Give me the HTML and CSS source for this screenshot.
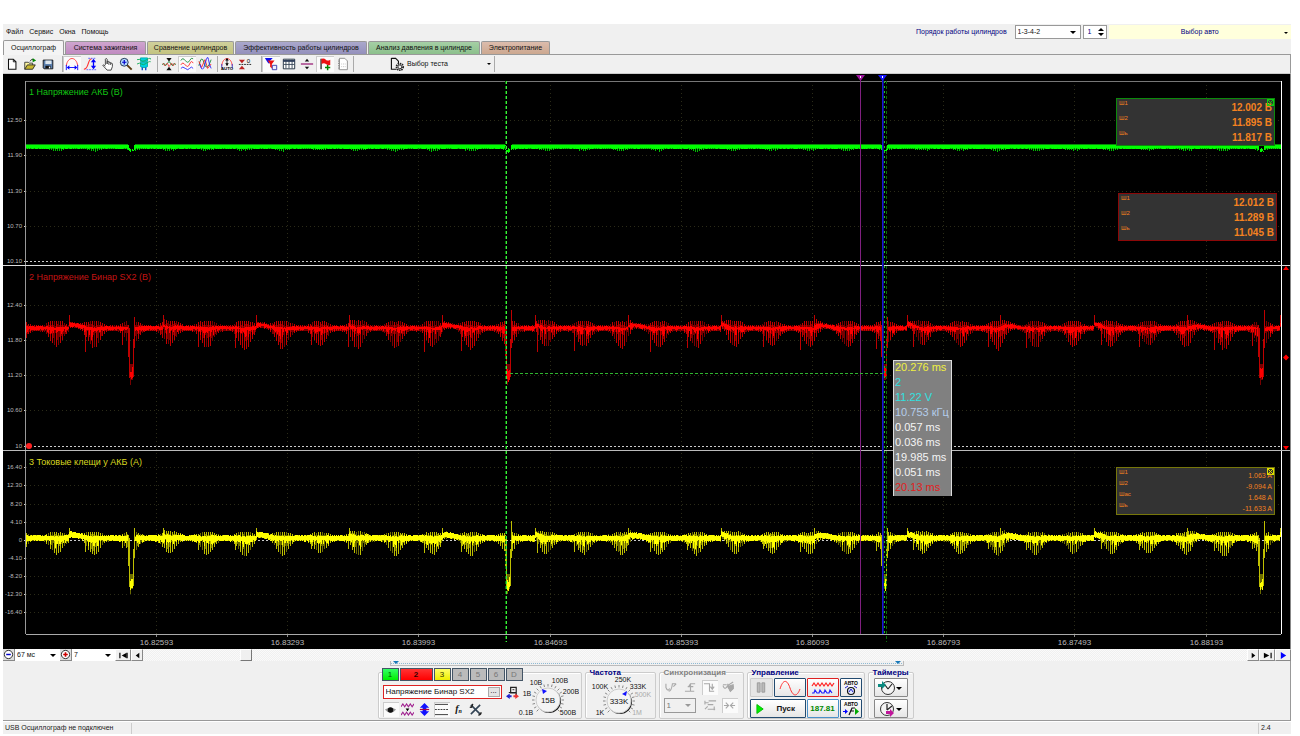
FILE: index.html
```html
<!DOCTYPE html>
<html lang="ru">
<head>
<meta charset="utf-8">
<title>USB Осциллограф</title>
<link rel="stylesheet" href="styles.css">
</head>
<body>
<div class="app">
  <header class="menubar">
    <nav class="menu">
      <button>Файл</button><button>Сервис</button><button>Окна</button><button>Помощь</button>
    </nav>
    <div class="setup">
      <label for="order">Порядок работы цилиндров</label>
      <span class="combo combo-order"><select id="order"><option>1-3-4-2</option></select></span>
      <span class="spin"><input id="cyl" value="1" aria-label="Цилиндр"><span class="spin-arrows"><button class="up" aria-label="Больше"></button><button class="down" aria-label="Меньше"></button></span></span>
      <button class="car">Выбор авто</button>
    </div>
  </header>

  <nav class="tabs">
    <button class="tab tab-active">Осциллограф</button>
    <button class="tab tab-ignition">Система зажигания</button>
    <button class="tab tab-compare">Сравнение цилиндров</button>
    <button class="tab tab-efficiency">Эффективность работы цилиндров</button>
    <button class="tab tab-pressure">Анализ давления в цилиндре</button>
    <button class="tab tab-power">Электропитание</button>
  </nav>

  <div class="toolbar">
    <div class="tools tools-file">
      <button class="tool" aria-label="Новый"><svg viewBox="0 0 16 16"><path d="M4 2.500h5.500l3 3v8.500H4z" fill="#fff" stroke="#111" stroke-width="1.200"/><path d="M9.500 2.500v3h3" fill="none" stroke="#111"/></svg></button>
      <button class="tool" aria-label="Открыть"><svg viewBox="0 0 16 16"><path d="M2 14V6h4l1 1h4v2" fill="#fff7a0" stroke="#333"/><path d="M2 14l3-5h9l-3 5z" fill="#c8b830" stroke="#222"/><path d="M8 5q1-3 4-2" fill="none" stroke="#222"/><path d="M11 1l4 3-4 2z" fill="#080"/></svg></button>
      <button class="tool" aria-label="Сохранить"><svg viewBox="0 0 16 16"><path d="M2.500 3.500h11v10h-10l-1-1z" fill="#5a80b0" stroke="#111"/><path d="M5 4h7v4H5z" fill="#dde6ee"/><path d="M5 10h6v3H5z" fill="#111"/><path d="M9 11h1.500v2H9z" fill="#fff"/></svg></button>
    </div>
    <div class="tools tools-view">
      <button class="tool pressed" aria-label="Период"><svg viewBox="0 0 16 16"><path d="M1.500 10C3-1 13-1 14.500 10" fill="none" stroke="#f33"/><path d="M1.500 9v6M14.500 9v6M4 12h8" stroke="#00f" fill="none"/><path d="M2 12l3-2.500v5zM14 12l-3-2.500v5z" fill="#00f"/></svg></button>
      <button class="tool" aria-label="Амплитуда"><svg viewBox="0 0 16 16"><path d="M1 14c6 0 4-12 9-12" fill="none" stroke="#f33" stroke-width="1.300"/><path d="M6 1.500h9M4 14.500h11" stroke="#55f" stroke-dasharray="2 1"/><path d="M12 4v8" stroke="#00f" stroke-width="1.500"/><path d="M12 2l3 4H9zM12 14l3-4H9z" fill="#00f"/></svg></button>
      <button class="tool" aria-label="Рука"><svg viewBox="0 0 16 16"><path d="M5 9V2.500q1-2 2 0V8V5q1.500-1 2 1q1.500-1 2 1q2-.5 2 1v3l-1.500 4H7L2 9.500q1-1.500 3 1" fill="#fff" stroke="#333"/><path d="M9 6v3M11 7v2" stroke="#333"/></svg></button>
      <button class="tool" aria-label="Масштаб"><svg viewBox="0 0 16 16"><path d="M9 9l5.500 5.500" stroke="#5a3a10" stroke-width="2.200"/><circle cx="6" cy="6" r="4.500" fill="#b8dcff" stroke="#124"/><path d="M3.500 6h5M6 3.500v5" stroke="#00c" stroke-width="1.400"/></svg></button>
      <button class="tool" aria-label="Печать"><svg viewBox="0 0 16 16"><path d="M4 1h8v4H4zM4 6h8v5l-2 1H6l-2-1z" fill="#00d0e0" stroke="#0aa"/><path d="M0 3q4-1 5 1t6-1 5 0M0 8q3-2 5 0t6-1 5-1" fill="none" stroke="#1a5"/><path d="M6 12v3M10 12v3" stroke="#04c" stroke-width="1.500"/></svg></button>
    </div>
    <div class="tools tools-wave">
      <button class="tool" aria-label="Центр"><svg viewBox="0 0 16 16"><path d="M0 9l2-2 2 3 4-5 4 5 2-3 2 2" fill="none" stroke="#183"/><path d="M1 7l2 3 3-3 2 4 3-4 2 3 2-3" fill="none" stroke="#e44"/><path d="M8 5L5 1h6zM8 11l-3 4h6z" fill="#111"/></svg></button>
      <button class="tool pressed" aria-label="Раздельно"><svg viewBox="0 0 16 16"><path d="M1 4q2-4 5 0t5 0 4-2" fill="none" stroke="#183"/><path d="M1 9q2-4 5 0t5-1 4-1" fill="none" stroke="#f22"/><path d="M1 13q2-3 5 0t5 0 4 0" fill="none" stroke="#22f"/></svg></button>
      <button class="tool" aria-label="Совместно"><svg viewBox="0 0 16 16"><path d="M1 10q3-14 6-3t8-4" fill="none" stroke="#183"/><path d="M1 5l3 7 4-9 3 10 4-5" fill="none" stroke="#f22"/><path d="M2 8q3 12 6 0t4-5 3 10" fill="none" stroke="#22f"/></svg></button>
    </div>
    <div class="tools tools-auto">
      <button class="tool" aria-label="Авто"><svg viewBox="0 0 16 16"><path d="M2 10C3-1 13-1 14 10" fill="none" stroke="#f33"/><path d="M2 8v5M14 8v5" stroke="#33c"/><path d="M8 2v8" stroke="#111"/><path d="M8 1l2 3H6zM8 10l2-3H6z"/><text x="1" y="15" font-size="5" font-weight="bold">AUTO</text></svg></button>
      <button class="tool" aria-label="Ноль"><svg viewBox="0 0 16 16"><path d="M1 3h7L4.500 7zM1 14h7L4.500 10z" fill="#b22"/><path d="M1 8.500h14" stroke="#111" stroke-dasharray="2 1"/><text x="10" y="7" font-size="7">0</text></svg></button>
    </div>
    <div class="tools tools-marks">
      <button class="tool pressed" aria-label="Фильтр"><svg viewBox="0 0 16 16"><path d="M1 1h9L6 5v3L4 6z" fill="#11e"/><path d="M4 4h8L9 8v5l-2-2V8z" fill="#e11"/><path d="M9.500 9.500h5v5h-5z" fill="#eef" stroke="#33a"/></svg></button>
      <button class="tool" aria-label="Таблица"><svg viewBox="0 0 16 16"><path d="M1.500 2.500h13v11h-13z" fill="#fff" stroke="#123"/><path d="M1.500 4.500h13" stroke="#235" stroke-width="2"/><path d="M4.500 3v10M8 3v10M11.500 3v10M2 8.500h12" stroke="#345"/></svg></button>
      <button class="tool" aria-label="Разделить"><svg viewBox="0 0 16 16"><path d="M1 8h14" stroke="#a03080" stroke-width="1.600"/><path d="M8 2l2.500 3h-5zM8 14l2.500-3h-5z" fill="#111"/></svg></button>
      <button class="tool pressed" aria-label="Метка"><svg viewBox="0 0 16 16"><path d="M3.500 2v12" stroke="#111" stroke-width="1.400"/><path d="M4 2q3-1 5 1t5 0v6q-3 1-5-1t-5 0z" fill="#e11"/><path d="M8 12h6M11 9v6" stroke="#080" stroke-width="1.700"/></svg></button>
      <button class="tool" aria-label="Отчет"><svg viewBox="0 0 16 16"><path d="M4 1.500h6l3 3v10H4z" fill="#fff" stroke="#888"/><path d="M3 3v11" stroke="#666" stroke-dasharray="1 1"/><path d="M6 8h5M6 11h5" stroke="#bbb" stroke-dasharray="1 1"/></svg></button>
    </div>
    <button class="test">
      <svg viewBox="0 0 16 16"><path d="M1.500 1v12H7M1.500 1.500H6l3 3V7" fill="none" stroke="#111" stroke-width="1.200"/><circle cx="10.500" cy="10.500" r="3.500" fill="none" stroke="#222" stroke-width="2" stroke-dasharray="1.500 .8"/><circle cx="10.500" cy="10.500" r="2" fill="none" stroke="#333"/></svg>
      <span>Выбор теста</span>
    </button>
  </div>

  <main class="scope">
    <svg class="plot" id="plot" role="img" aria-label="Осциллограммы трёх каналов"></svg>
    <section class="measure measure-one"><i class="close"></i>
      <dl><div><dt>Ш1</dt><dd>12.002 В</dd></div><div><dt>Ш2</dt><dd>11.895 В</dd></div><div><dt>Шь</dt><dd>11.817 В</dd></div></dl>
    </section>
    <section class="measure measure-two">
      <dl><div><dt>Ш1</dt><dd>12.012 В</dd></div><div><dt>Ш2</dt><dd>11.289 В</dd></div><div><dt>Шь</dt><dd>11.045 В</dd></div></dl>
    </section>
    <section class="measure measure-three"><i class="close"></i>
      <dl><div><dt>Ш1</dt><dd>1.063 A</dd></div><div><dt>Ш2</dt><dd>-9.094 A</dd></div><div><dt>Шас</dt><dd>1.648 A</dd></div><div><dt>Шь</dt><dd>-11.633 A</dd></div></dl>
    </section>
    <ul class="readout" id="readout">
      <li class="yellow">20.276 ms</li><li class="cyan">2</li><li class="cyan">11.22 V</li><li class="pale">10.753 кГц</li><li>0.057 ms</li><li>0.036 ms</li><li>19.985 ms</li><li>0.051 ms</li><li class="red">20.13 ms</li>
    </ul>
  </main>

  <div class="timeline">
    <button class="step" aria-label="Сжать"><svg viewBox="0 0 12 12"><circle cx="6" cy="6" r="4.500" fill="#fff" stroke="#222"/><path d="M3.500 6h5" stroke="#00c" stroke-width="1.600"/></svg></button>
    <span class="combo combo-time"><select aria-label="Развёртка"><option>67 мс</option></select></span>
    <button class="step" aria-label="Растянуть"><svg viewBox="0 0 12 12"><circle cx="6" cy="6" r="4.500" fill="#fff" stroke="#222"/><path d="M3.500 6h5M6 3.500v5" stroke="#c00" stroke-width="1.800"/></svg></button>
    <span class="combo combo-zoom"><select aria-label="Масштаб"><option>7</option></select></span>
    <button class="nav nav-wide" aria-label="В начало"><svg viewBox="0 0 12 10"><path d="M2 2v6M10 2v6" stroke="#000" stroke-width="1.300"/><path d="M9.500 2v6L4 5z"/></svg></button>
    <button class="nav" aria-label="Назад"><svg viewBox="0 0 12 10"><path d="M8 2v6L4 5z"/></svg></button>
    <div class="track"><button class="thumb" aria-label="Прокрутка"></button></div>
    <button class="nav" aria-label="Вперёд"><svg viewBox="0 0 12 10"><path d="M4 2v6l4-3z"/></svg></button>
    <button class="nav nav-wide" aria-label="В конец"><svg viewBox="0 0 12 10"><path d="M10 2v6" stroke="#000" stroke-width="1.300"/><path d="M2 2v6l6-3z"/></svg></button>
    <button class="nav nav-wide" aria-label="Воспроизвести"><svg viewBox="0 0 12 10"><path d="M3 1v8l6-4z" fill="#00f"/></svg></button>
  </div>

  <div class="panel">
    <div class="splitter"><i></i><i></i></div>
    <div class="groups">
      <section class="group channels">
        <div class="chan-col">
          <div class="chan-row">
            <button class="chan chan-1">1</button><button class="chan chan-2">2</button><button class="chan chan-3">3</button><button class="chan">4</button><button class="chan">5</button><button class="chan">6</button><button class="chan">D</button>
          </div>
          <div class="name-row">
            <span class="name-box"><input aria-label="Имя канала" value="Напряжение Бинар SX2"><button>...</button></span>
            <button class="mini" aria-label="Вход"><svg viewBox="0 0 14 14"><path d="M5 1.500h6v6H5zM3 7h8v3" fill="none" stroke="#222" stroke-width="1.300"/><path d="M7 4h2" stroke="#222"/><path d="M0 11l4-3v2h2v2H4v2z" fill="#22c"/><path d="M14 11l-4-3v2H8v2h2v2z" fill="#e33"/></svg></button>
          </div>
          <div class="icon-row">
            <button class="mini pressed" aria-label="Показать"><svg viewBox="0 0 14 14"><path d="M1 7q6-4 12 0-2 3-6 3.500Q3 10 1 7z" fill="#999"/><circle cx="7" cy="7.500" r="3" fill="#111"/></svg></button>
            <button class="mini" aria-label="Инверсия"><svg viewBox="0 0 14 14"><path d="M0 4l2-3 2 3 2-3 2 3 2-3 2 3 2-3M0 13l2-3 2 3 2-3 2 3 2-3 2 3 2-3" fill="none" stroke="#a02090" stroke-width="1.200"/><path d="M5 6h4L7 9z"/></svg></button>
            <button class="mini" aria-label="Сдвиг"><svg viewBox="0 0 14 14"><path d="M7 0l5 5H9v4h3l-5 5-5-5h3V5H2z" fill="#11f"/><path d="M2 7h10" stroke="#a04" stroke-width="1.300"/></svg></button>
            <button class="mini pressed" aria-label="Сетка"><svg viewBox="0 0 14 14"><path d="M0 1.500h14M0 12.500h14" stroke="#333"/><path d="M0 7h14" stroke="#333" stroke-dasharray="2 1"/></svg></button>
            <button class="mini func" aria-label="Функция">f<sub>n</sub></button>
            <button class="mini" aria-label="Настройка"><svg viewBox="0 0 14 14"><path d="M2 2l10 10M12 2L2 12" stroke="#345" stroke-width="1.700"/><path d="M1 4q2 2 3-3M10 13q3 0 3-3" stroke="#222" fill="none" stroke-width="1.500"/></svg></button>
          </div>
        </div>
        <svg class="knob" viewBox="0 0 62 46">
          <g id="ticksOne"></g>
          <circle cx="32" cy="29" r="12" class="knob-shade"/><circle cx="31" cy="28" r="12" class="knob-face"/>
          <path d="M25 17l5 2-4 3z" class="pointer"/>
          <g class="knob-text"><text x="31" y="31" class="knob-value">15В</text><text x="19" y="13">10В</text><text x="43" y="11">100В</text><text x="54" y="22">200В</text><text x="51" y="43">500В</text><text x="9" y="43">0.1В</text><text x="10" y="24">1В</text></g>
        </svg>
      </section>
      <section class="group freq">
        <h2>Частота</h2>
        <svg class="knob" viewBox="0 0 66 46">
          <g id="ticksTwo"></g>
          <circle cx="34" cy="29" r="12" class="knob-shade"/><circle cx="33" cy="28" r="12" class="knob-face"/>
          <path d="M41 18l-1 5-4-2z" class="pointer"/>
          <g class="knob-text"><text x="33" y="31" class="knob-value">333K</text><text x="14" y="16">100K</text><text x="37" y="9">250K</text><text x="52" y="16">333K</text><text x="57" y="24" class="off">500K</text><text x="51" y="42" class="off">1M</text><text x="14" y="42">1K</text></g>
        </svg>
      </section>
      <section class="group sync">
        <h2>Синхронизация</h2>
        <div class="sync-row">
          <button class="mini" disabled aria-label="Уровень"><svg viewBox="0 0 14 14"><path d="M1 3v4q2 5 4 1M4 11q3 0 4-8h4M9 6l3-3" /></svg></button>
          <button class="mini" disabled aria-label="Фронт"><svg viewBox="0 0 14 14"><path d="M1 11h6V3h5M7 11h4M4 6h6M7 3L5 6"/></svg></button>
          <button class="mini lit" disabled aria-label="Спад"><svg viewBox="0 0 14 14"><path d="M1 3h6v8h5M10 3v5M8 6l2 3 2-3"/></svg></button>
          <button class="mini" disabled aria-label="Ручной"><svg viewBox="0 0 14 14"><path d="M1 5q2 6 5 0l6-4M1 4h4M6 3l3 8 3-3V5"/><path class="filled" d="M6 6l6-2v4l-3 3z"/></svg></button>
        </div>
        <div class="sync-row">
          <span class="combo combo-sync"><select disabled aria-label="Канал синхронизации"><option>1</option></select></span>
          <button class="mini" disabled aria-label="Диапазон"><svg viewBox="0 0 14 14"><path d="M1 4h4M1 2v4M5 2h8M4 6h6M4 11h8M4 8l-3 3M11 8v4"/></svg></button>
          <button class="mini lit" disabled aria-label="Центровать"><svg viewBox="0 0 14 14"><path d="M1 7h5M3 4l3 3-3 3M13 7H8M11 4L8 7l3 3"/></svg></button>
        </div>
      </section>
      <section class="group control">
        <h2>Управление</h2>
        <div class="control-grid">
          <div class="pair"><button class="push pause" aria-label="Пауза"><svg viewBox="0 0 12 14"><path d="M2 2h3v10H2zM7 2h3v10H7z" fill="#bbb" stroke="#999"/></svg></button><button class="push sine" aria-label="Синус"><svg viewBox="0 0 26 16"><path d="M3 9C6-1 10-1 13 8s7 9 10 1" fill="none" stroke="#f33"/></svg></button></div>
          <button class="push push-red" aria-label="Сравнить"><svg viewBox="0 0 26 16"><path d="M2 6l2-3 2 3 2-3 2 3 2-3 2 3 2-3 2 3 2-3 2 3 2-3" fill="none" stroke="#f22" stroke-width="1.200"/><path d="M2 13h2l1-3 2 3h2l1-3 2 3h2l1-3 2 3h2l1-3 2 3" fill="none" stroke="#22f" stroke-width="1.200"/></svg></button>
          <button class="push" aria-label="Авто поиск"><svg viewBox="0 0 18 16"><text x="9" y="5" text-anchor="middle" class="auto">АВТО</text><circle cx="9" cy="11" r="3.500" fill="#dfe9ff" stroke="#111" stroke-width="1.200"/><path d="M3 8l3-2M15 8l-3-2M7 12l2-3 2 3" stroke="#22c" fill="none"/></svg></button>
          <button class="push start"><svg viewBox="0 0 10 12"><path d="M1 1l7 5-7 5z" fill="#0e0" stroke="#0b0"/></svg><span>Пуск</span></button>
          <button class="push rate">187.81</button>
          <button class="push" aria-label="Авто пуск"><svg viewBox="0 0 18 16"><text x="9" y="5" text-anchor="middle" class="auto">АВТО</text><path d="M3 8l3 2.500L3 13z" fill="#00f"/><path d="M13 7l4 3.500-4 3.500z" fill="#0a0"/><path d="M1 10.500h3" stroke="#00f"/><path d="M7 14l3-7h3M8 10h4" stroke="#111" fill="none" stroke-width="1.200"/></svg></button>
        </div>
      </section>
      <section class="group timers">
        <h2>Таймеры</h2>
        <button class="push timer" aria-label="Таймер пуска"><svg viewBox="0 0 18 16"><circle cx="10" cy="8" r="6.500" fill="#f4f4f4" stroke="#333"/><path d="M10 9l-3-4M10 9l4-5" stroke="#222" fill="none" stroke-width="1.200"/><path d="M0 4h4V1l4 4-4 4V7H0z" fill="#0a8a80"/></svg></button>
        <button class="push timer" aria-label="Таймер остановки"><svg viewBox="0 0 18 16"><circle cx="9" cy="8" r="6.500" fill="#f4f4f4" stroke="#333"/><path d="M9 9V3M9 9l5-4" stroke="#222" fill="none" stroke-width="1.200"/><path d="M8 10h4V8l4 4-4 4v-3H8z" fill="#c0169a"/></svg></button>
      </section>
    </div>
  </div>

  <footer class="status"><span class="status-main">USB Осциллограф не подключен</span><span class="status-version">2.4</span></footer>
</div>
<script src="plot.js"></script>
</body>
</html>
```
FILE: styles.css
```css
* { box-sizing: border-box; }
body {
  margin: 0;
  padding: 24px 9px 0 3px;
  background: #fff;
  font: 7px/10px "Liberation Sans", Arial, sans-serif;
  color: #111;
}
button, input, select { font: inherit; color: inherit; margin: 0; padding: 0; border: 0; border-radius: 0; background: none; outline: 0; }
h2, ul, dl, dt, dd { margin: 0; padding: 0; }
svg { display: block; }
.app { background: #f0f0f0; display: flex; flex-direction: column; }

.menubar { display: flex; justify-content: space-between; height: 16px; align-items: center; }
.menu { display: flex; gap: 6px; padding-left: 3px; }
.setup { display: flex; align-items: center; gap: 2px; color: #000080; flex: 0 1 375px; }
.setup label { white-space: nowrap; padding-right: 6px; }
.combo { position: relative; display: flex; background: #fff; height: 14px; color: #111; }
.combo select { appearance: none; width: 100%; padding-left: 2px; opacity: 1; }
.combo::after { content: ""; position: absolute; right: 4px; top: 5px; border: 3px solid transparent; border-top-color: #000; border-bottom: 0; pointer-events: none; }
.combo-order { border: 1px solid #999; width: 66px; flex: none; }
.spin { display: flex; height: 14px; width: 24px; flex: none; background: #fff; border: 1px solid #999; }
.spin input { width: 14px; padding-left: 4px; }
.spin-arrows { display: flex; flex-direction: column; gap: 2px; justify-content: center; }
.spin-arrows button { width: 0; height: 0; border: 3px solid transparent; }
.spin-arrows .up { border-bottom: 3px solid #000; border-top: 0; }
.spin-arrows .down { border-top: 3px solid #000; border-bottom: 0; }
.car { flex: 1; height: 14px; background: #ffffdc; position: relative; }
.car::after, .test::after { content: ""; position: absolute; right: 3px; top: 7px; border: 2px solid transparent; border-top-color: #000; border-bottom: 0; }

.tabs { display: flex; align-items: flex-end; gap: 1px; height: 15px; border-bottom: 1px solid #999; }
.tab { height: 13px; border: 1px solid #999; border-bottom: 0; border-radius: 2px 2px 0 0; white-space: nowrap; }
.tab-active { width: 61px; height: 15px; background: #f4f4f4; margin-bottom: -1px; }
.tab-ignition { width: 81px; background: linear-gradient(#cfa5cf, #c08ac0); }
.tab-compare { width: 87px; background: linear-gradient(#d0d09c, #c3c380); }
.tab-efficiency { width: 132px; background: linear-gradient(#aaa8cc, #9490bc); }
.tab-pressure { width: 112px; background: linear-gradient(#a5cfa5, #8cc08c); }
.tab-power { width: 69px; background: linear-gradient(#dcbcac, #cca890); }

.toolbar { display: flex; height: 19px; align-items: center; border-bottom: 1px solid #ccc; border-right: 1px solid #999; }
.tools { display: flex; border-right: 1px solid #aaa; height: 16px; }
.tools-file { padding-right: 5px; }
.tools-view { padding-right: 4px; }
.tools-wave { padding: 0 3px 0 2px; }
.tools-auto { padding-right: 7px; }
.tools-marks { padding-right: 1px; }
.tool { width: 18px; height: 16px; display: grid; place-items: center; }
.tool svg { width: 14px; height: 14px; }
.pressed, .lit { background: #fbfbfb; box-shadow: inset 1px 1px #ccc; }
.test { position: relative; display: flex; align-items: center; gap: 2px; width: 141px; height: 16px; padding-left: 36px; border-right: 1px solid #aaa; }
.test svg { width: 15px; height: 15px; }

.scope { position: relative; background: #000; border-right: 1px solid #888; overflow: hidden; }
.plot { width: 100%; height: 575px; font-family: "Liberation Sans", Arial, sans-serif; }
.plot text { fill: #bbb; }
.plot .time { font-size: 8px; text-anchor: middle; }
.plot .axis { font-size: 6px; text-anchor: end; }
.plot .title { font-size: 9px; }
.plot .crisp { shape-rendering: crispEdges; }

.measure { position: absolute; right: 15px; width: 159px; background: #333; border: 1px solid; color: #f58220; padding: 1px 2px 0 2px; }
.measure-one { top: 24px; height: 48px; border: 1px solid #0b8a0b; }
.measure-two { right: 13px; top: 119px; height: 48px; border-color: #8c0808; }
.measure-three { top: 393px; height: 48px; border-color: #77770a; }
.measure dl div { display: flex; justify-content: space-between; height: 15px; }
.measure dt { font-size: 6px; line-height: 6px; }
.measure dd { font-size: 10px; line-height: 16px; }
.measure-one dd, .measure-two dd { font-weight: bold; }
.measure-three dl div { height: 11px; }
.measure-three dd { font-size: 7px; line-height: 14px; }
.close { position: absolute; right: 0; top: 0; width: 7px; height: 7px; border: 1px solid #1c1; background: linear-gradient(45deg, transparent 42%, #1c1 42% 58%, transparent 58%), linear-gradient(-45deg, transparent 42%, #1c1 42% 58%, transparent 58%); }
.measure-three .close { border-color: #dd0; background: linear-gradient(45deg, transparent 42%, #dd0 42% 58%, transparent 58%), linear-gradient(-45deg, transparent 42%, #dd0 42% 58%, transparent 58%); }

.readout { position: absolute; top: 286px; left: 890px; width: 59px; list-style: none; background: #808080; border: 1px solid #ddd; border-bottom: 0; color: #f4f4f4; padding-left: 1px; font-size: 11px; line-height: 13px; white-space: nowrap; }
.readout li { height: 15px; }
.readout .yellow { color: #f0f040; }
.readout .cyan { color: #30e0e0; }
.readout .pale { color: #b4cdea; }
.readout .red { color: #e02020; }

.timeline { display: flex; height: 12px; background: #f0f0f0; }
.step { width: 12px; height: 12px; background: #ddd; border-right: 1px solid #888; border-bottom: 1px solid #888; }
.timeline .combo { height: 12px; }
.combo-time { width: 45px; }
.combo-zoom { width: 43px; }
.nav { width: 12px; height: 12px; background: #f0f0f0; border: 1px solid #fff; border-right-color: #888; border-bottom-color: #888; display: grid; place-items: center; }
.nav svg { width: 11px; height: 9px; }
.nav-wide { width: 16px; }
.track { flex: 1; padding-left: 7.5%; background: repeating-conic-gradient(#f0f0f0 0 25%, #fafafa 0 50%) 0 0 / 2px 2px; display: flex; }
.thumb { width: 12px; height: 12px; background: #f0f0f0; border: 1px solid #fff; border-right-color: #777; border-bottom-color: #777; }

.panel { border-bottom: 1px solid #999; border-right: 1px solid #999; padding-bottom: 1px; display: flex; flex-direction: column; align-items: center; }
.splitter { width: 514px; height: 5px; border: 1px solid #bbb; border-top: 0; display: flex; justify-content: space-between; padding: 0 2px; background: repeating-linear-gradient(90deg, #8fbad4 0 1px, #f0f0f0 1px 2px) 0 2px / 100% 1px no-repeat; }
.splitter i { border: 3px solid transparent; border-top-color: #1878b8; border-bottom: 0; height: 3px; }
.groups { display: flex; gap: 3px; padding: 2px 2px 0 0; }
.group { position: relative; height: 51px; }
.group::before { content: ""; position: absolute; inset: 4px 0 0 0; border: 1px solid #ccc; border-radius: 2px; box-shadow: inset 1px 1px #fff; }
.group > * { position: relative; }
.group h2 { font-size: 8px; line-height: 9px; color: #000080; background: #f0f0f0; width: max-content; margin: 0 0 0 5px; }
.channels { width: 204px; display: flex; padding-left: 4px; }
.chan-col { width: 142px; flex: none; }
.chan-row { display: flex; gap: 1px; background: #f0f0f0; width: max-content; }
.chan { width: 17px; height: 13px; background: #bbb; border: 1px solid #456; color: #777; font-size: 8px; }
.chan-1 { background: linear-gradient(#3f6, #0e0); color: #050; }
.chan-2 { width: 33px; background: linear-gradient(#f33, #f00); color: #300; font-weight: bold; }
.chan-3 { background: linear-gradient(#ff6, #ee0); color: #330; }
.name-row { display: flex; gap: 3px; padding: 4px 0 2px 1px; }
.name-box { display: flex; width: 119px; height: 14px; border: 1px solid #d22; background: #fff; padding: 1px; font-size: 8px; }
.name-box input { flex: 1; min-width: 0; padding-left: 1px; }
.name-box button { width: 12px; background: #e4e4e4; border: 1px solid #aaa; line-height: 4px; padding-bottom: 3px; }
.icon-row { display: flex; gap: 1px; padding-left: 1px; }
.mini { width: 16px; height: 15px; display: grid; place-items: center; }
.mini svg { width: 13px; height: 13px; }
.func { display: block; font: italic bold 10px/13px "Liberation Serif", serif; }
.func sub { font-size: 6px; vertical-align: -1px; }
.channels .knob { width: 62px; height: 46px; margin: 4px 0 0 -7px; flex: none; }
.freq { width: 71px; }
.freq .knob { width: 66px; height: 46px; margin: -4px 0 0 1px; }
.knob-shade { fill: #222; }
.knob-face { fill: #f4f4f4; stroke: #ccc; }
.knob .ticks { stroke: #888; }
.knob .pointer { fill: #11f; }
.knob-text text { font-size: 7px; text-anchor: middle; fill: #111; }
.knob-text .knob-value { font-size: 8px; }
.knob-text .off { fill: #aaa; }
.sync { width: 85px; }
.sync h2 { color: #808080; }
.sync-row { display: flex; gap: 3px; padding: 3px 0 0 5px; }
.sync-row svg path { fill: none; stroke: #a8a8a8; stroke-width: 1.200; }
.sync-row svg .filled { fill: #a8a8a8; }
.combo-sync { width: 32px; height: 15px; border: 1px solid #999; background: #f0f0f0; margin-right: 4px; }
.combo-sync select, .combo-sync { color: #777; font-size: 8px; }
.combo-sync::after { border-top-color: #999; }
.control { width: 118px; }
.control-grid { display: grid; grid-template-columns: 56px 32px 22px; gap: 2px 1px; padding: 1px 0 0 3px; }
.pair { display: flex; gap: 1px; }
.push { height: 19px; border: 1px solid #234b70; border-radius: 1px; background: linear-gradient(#fff, #e6e6e6); display: grid; place-items: center; }
.push svg { height: 16px; }
.pause { width: 23px; border-color: #ccc; background: #e6e6e6; }
.pause svg { height: 13px; width: 12px; }
.sine { flex: 1; }
.push-red { border-color: #d22; }
.push.start { display: flex; align-items: center; gap: 12px; padding-left: 5px; font-weight: bold; font-size: 8px; }
.start svg { width: 9px; height: 12px; }
.rate { border-color: #4a90c8; color: #080; font-weight: bold; font-size: 8px; }
.auto { font-size: 5px; font-weight: bold; }
.timers { width: 46px; }
.timer { position: relative; width: 34px; margin: 1px 0 2px 6px; justify-items: start; padding-left: 3px; border-color: #888; }
.timer + .timer { margin-top: 0; }
.timer::after { content: ""; position: absolute; right: 5px; top: 8px; border: 3px solid transparent; border-top-color: #000; border-bottom: 0; }
.timer svg { width: 18px; }

.status { display: flex; height: 13px; justify-content: space-between; border-top: 1px solid #fff; color: #222; align-items: center; }
.status-main { width: 129px; padding-left: 2px; border-right: 1px solid #ccc; height: 11px; }
.status-version { width: 33px; padding-left: 2px; border-left: 1px solid #ccc; height: 11px; }
```
FILE: plot.js
```js
const plot = document.getElementById('plot');
const readout = document.getElementById('readout');
const LEFT = 23, TOP = 7, BOTTOM = 560, BASE_SPAN = 1255;

const channels = [
  { name: '1 Напряжение АКБ (В)', color: '#00ff00', title: '#12c412', dim: '#0a8a0a', text: 21, base: 72, rise: 0, fall: 3, core: 1, dip: 79, spike: 0, drop: 0,
    axis: [['12.50', 46], ['11.90', 81], ['11.30', 117], ['10.70', 152], ['10.10', 187]], zero: 187 },
  { name: '2 Напряжение Бинар SX2 (В)', color: '#ff0000', title: '#c41414', dim: '#780000', text: 206, base: 254, rise: 7, fall: 18, core: 1, dip: 311, top: 236, spike: 14, drop: 23,
    axis: [['12.40', 231], ['11.80', 266], ['11.20', 301], ['10.60', 336], ['10', 372]], zero: 372 },
  { name: '3 Токовые клещи у АКБ (А)', color: '#ffff00', title: '#d8d820', dim: '#6c6c00', text: 391, base: 464, rise: 6, fall: 15, core: 2, dip: 520, top: 447, spike: 11, drop: 14,
    axis: [['16.40', 393], ['12.30', 411], ['8.20', 430], ['4.10', 448], ['0', 466], ['-4.10', 484], ['-8.20', 502], ['-12.30', 520], ['-16.40', 538]], zero: 466 }
];
const times = ['16.82593', '16.83293', '16.83993', '16.84693', '16.85393', '16.86093', '16.86793', '16.87493', '16.88193'];
const starts = [105, 482, 858, 1235];

function noise(n) {
  const v = Math.sin(n * 12.9898) * 43758.5453;
  return v - Math.floor(v);
}

function trace(ch, seed, X) {
  let bright = '', dim = '', mid = '';
  const seg = (x, from, to) => `M${x} ${Math.round(from)}V${Math.round(to)}`;
  for (let i = 0; i < BASE_SPAN; i++) {
    const x = Math.round(X(i)) + 0.5;
    const start = starts.find(s => i >= s - 3 && i <= s + 3);
    const r = noise(i + seed), r2 = noise(i * 3 + seed);
    if (start !== undefined) {
      const k = i - start;
      const depth = ch.dip - ch.base;
      if (!ch.spike) {
        bright += Math.abs(k) < 3 ? seg(x, ch.base + 2 + r * 3, ch.base + depth - r2 * 2) : seg(x, ch.base - 1, ch.base + 4);
        continue;
      }
      const peak = start > 1000 || start === 482 ? ch.top : ch.top + 7;
      if (k === -3) mid += seg(x, ch.base - 3, ch.base + depth * 0.5);
      else if (k === -2) mid += seg(x, ch.base, ch.base + depth * 0.88);
      else if (k === 3) mid += seg(x, peak, ch.base + depth * 0.35);
      else if (k === 2) mid += seg(x, ch.base + depth * 0.2, ch.base + depth * 0.86);
      else {
        bright += seg(x, ch.base + depth * (0.68 + r * 0.12), ch.base + depth * (0.86 + r2 * 0.1));
        dim += seg(x, ch.base + depth * 0.64, k < 0 ? ch.dip : ch.dip - 5);
      }
      continue;
    }
    const phase = ((i - 30 + 18.8) % 37.66 + 37.66) % 37.66 - 18.8;
    const burst = Math.round((i - 30 - phase) / 37.66);
    const size = 0.85 + noise(burst + 5) * 0.25;
    const env = Math.exp(-Math.pow(phase / 8, 2)) * size;
    const wide = Math.exp(-Math.pow(phase / 10, 4));
    const since = ((i - 43) % 93.1 + 93.1) % 93.1;
    const lift = ch.spike && i > 42 && since < 22 ? 4 * (1 - since / 22) * (1 - env * 0.8) : 0;
    const y = ch.base - lift;
    if (!ch.spike) {
      bright += seg(x, y - 1, y + 2 + r);
      dim += seg(x, y - 2, y + 3);
      if (i % 2) mid += seg(x, y, y + 2.5 + env * ch.fall * (0.6 + r2 * 0.5));
      continue;
    }
    const sag = env * ch.fall;
    bright += seg(x, y - ch.core - r * 1.4 + sag * 0.06, y + ch.core + r2 * 1.4 + sag * 0.65 * r * r2);
    const stripe = i % 2 === 0;
    const up = 2.4 + wide * (ch.rise - 3) + r;
    const down = 2.4 + sag * (0.85 + r2 * 0.15) + r;
    if (stripe) {
      if (r2 > 0.3) mid += seg(x, y - up, y + down);
      else dim += seg(x, y - up, y + down);
    } else {
      dim += seg(x, y - 2 - wide * 2 * r, y + 2.5 + sag * 0.7 * r);
    }
    if (i > 42 && since < 1) mid += seg(x, ch.base - ch.spike + 1, y);
    if (Math.abs(phase + 9) < 0.5 && burst % 3 !== 0) mid += seg(x, y, ch.base + ch.drop * (0.7 + noise(burst) * 0.35));
  }
  return `<g class="crisp" fill="none"><path d="${dim}" stroke="${ch.dim}"/><path d="${mid}" stroke="${ch.color}" stroke-opacity=".75"/><path d="${bright}" stroke="${ch.color}"/></g>`;
}

function line(x1, y1, x2, y2, color, dash) {
  return `<line class="crisp" x1="${x1}" y1="${y1}" x2="${x2}" y2="${y2}" stroke="${color}"${dash ? ` stroke-dasharray="${dash}"` : ''}/>`;
}

function draw() {
  const width = plot.clientWidth;
  const right = width - 9;
  const X = i => LEFT + i * (right - LEFT) / BASE_SPAN;
  let out = '';
  times.forEach((t, i) => {
    const x = Math.round(X(130 + i * 131.2)) + 0.5;
    out += line(x, TOP + 4, x, BOTTOM, '#2b2b18', '1 3') + line(x, BOTTOM, x, BOTTOM + 3, '#888');
    out += `<text class="time" x="${x}" y="${BOTTOM + 11}">${t}</text>`;
  });
  channels.forEach((ch, n) => {
    ch.axis.forEach(([label, y]) => {
      const zero = y === ch.zero;
      out += line(LEFT, y + 0.5, right, y + 0.5, zero ? '#ccc' : '#2b2b18', zero ? '2 2' : '1 3');
      out += line(LEFT - 2, y + 0.5, LEFT, y + 0.5, '#ccc');
      out += `<text class="axis" x="${LEFT - 4}" y="${y + 2}">${label}</text>`;
    });
    out += trace(ch, n * 917, X);
    out += `<text class="title" x="26" y="${ch.text}" style="fill:${ch.title}">${ch.name}</text>`;
  });
  out += line(LEFT, TOP + 0.5, right, TOP + 0.5, '#777') + line(LEFT - 0.5, TOP, LEFT - 0.5, BOTTOM, '#999');
  out += line(right + 0.5, TOP, right + 0.5, BOTTOM, '#fff') + line(LEFT, BOTTOM + 0.5, right, BOTTOM + 0.5, '#aaa');
  out += line(0, 191.5, width, 191.5, '#ddd') + line(0, 376.5, width, 376.5, '#bbb');

  const a = Math.round(X(480)), p = Math.round(X(834)), b = Math.round(X(857));
  out += line(a + 0.5, TOP, a + 0.5, 568, '#3cf03c', '3 2') + line(a - 0.5, TOP, a - 0.5, 568, '#0a700a', '3 2');
  out += line(p + 0.5, 5, p + 0.5, BOTTOM, '#802080') + line(b - 0.5, 5, b - 0.5, BOTTOM, '#1818d8') + line(b + 0.5, 5, b + 0.5, BOTTOM, '#101080');
  out += line(b + 1.5, TOP, b + 1.5, BOTTOM, '#20c820', '2 3') + line(b + 3.5, TOP, b + 3.5, 568, '#0a700a', '3 2');
  out += line(a + 4, 299.5, b + 2, 299.5, '#2fb52f', '3 2');
  out += `<path d="M${p - 4} 1h9l-4.500 6z" fill="#9c149c"/><path d="M${b - 5} 1h9l-4.500 6z" fill="#1414ff"/>`;
  out += line(p + 0.5, 2, p + 0.5, 4, '#fff') + line(b - 0.5, 2, b - 0.5, 4, '#fff');
  out += `<circle cx="26" cy="372" r="3" fill="#f22"/>`;
  const edge = right + 5;
  out += `<path d="M${edge - 3} 196h6l-3-4zM${edge - 3} 372h6l-3 4zM${edge - 3} 283.500l3-3 3 3-3 3z" fill="#f00"/>`;
  plot.innerHTML = out;
  readout.style.left = `${b + 10}px`;
}

function ticks(id, cx, cy) {
  let d = '';
  for (let deg = -225; deg <= 45; deg += 15) {
    const c = Math.cos(deg * Math.PI / 180), s = Math.sin(deg * Math.PI / 180);
    d += `M${(cx + c * 13.5).toFixed(1)} ${(cy + s * 13.5).toFixed(1)}L${(cx + c * 16).toFixed(1)} ${(cy + s * 16).toFixed(1)}`;
  }
  document.getElementById(id).innerHTML = `<path class="ticks" d="${d}"/>`;
}

ticks('ticksOne', 31, 28);
ticks('ticksTwo', 33, 28);
draw();
window.addEventListener('resize', draw);
```
